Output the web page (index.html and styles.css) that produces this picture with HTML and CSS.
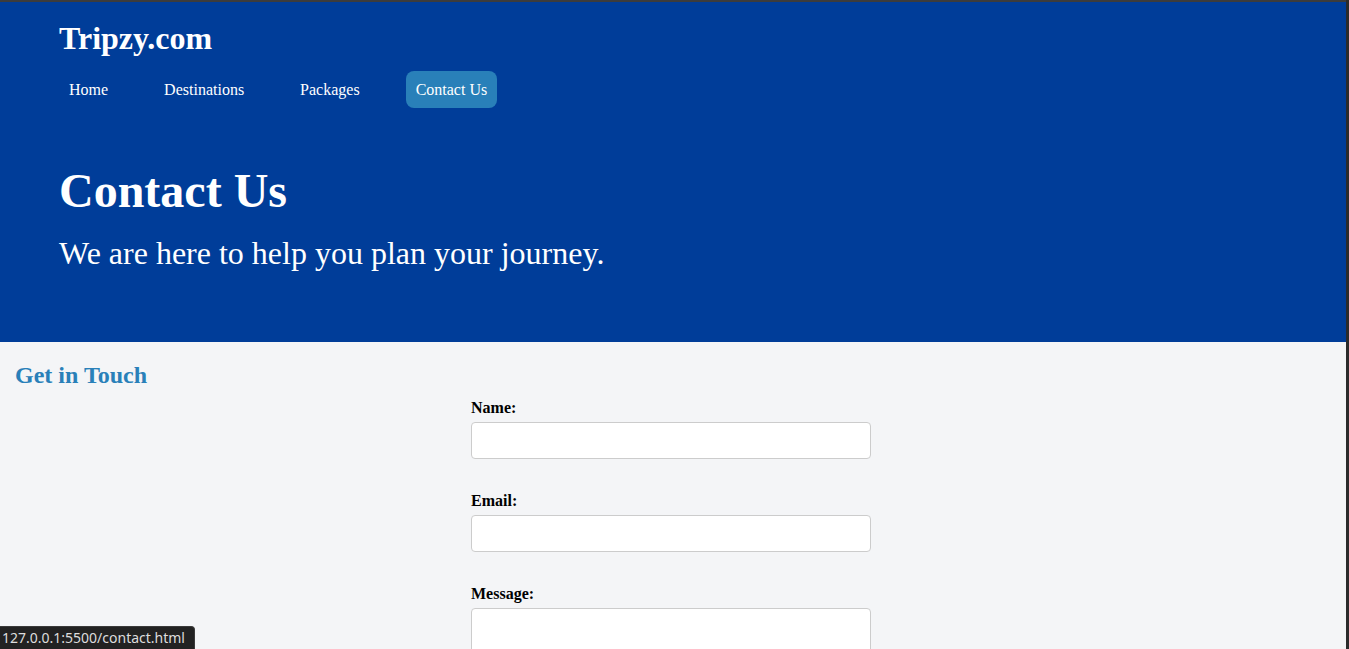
FILE: index.html
```html
<!DOCTYPE html>
<html lang="en">
<head>
<meta charset="utf-8">
<title>Contact Us - Tripzy.com</title>
<link rel="stylesheet" href="styles.css">
</head>
<body>
<header class="site-header">
  <h1 class="logo">Tripzy.com</h1>
  <nav class="nav">
    <a class="nav-link" href="#">Home</a>
    <a class="nav-link" href="#">Destinations</a>
    <a class="nav-link" href="#">Packages</a>
    <a class="nav-link active" href="#">Contact Us</a>
  </nav>
  <div class="hero">
    <h1 class="hero-title">Contact Us</h1>
    <p class="hero-sub">We are here to help you plan your journey.</p>
  </div>
</header>
<main class="contact">
  <h2 class="contact-title">Get in Touch</h2>
  <form class="form">
    <div class="field">
      <label class="label" for="name">Name:</label>
      <input class="input" id="name" type="text">
    </div>
    <div class="field">
      <label class="label" for="email">Email:</label>
      <input class="input" id="email" type="email">
    </div>
    <div class="field">
      <label class="label" for="msg">Message:</label>
      <textarea class="input textarea" id="msg"></textarea>
    </div>
  </form>
</main>
<div class="status">127.0.0.1:5500/contact.html</div>
</body>
</html>
```
FILE: styles.css
```css
html {
  background: #2b2b2b;
}
body {
  margin: 0 3px 0 0;
  border-top: 2px solid #3c3c3c;
  background: #f4f5f7;
  font-family: "Liberation Serif", "Times New Roman", serif;
  color: #000;
  min-height: 700px;
}
.site-header {
  background: #003d99;
  color: #fff;
  padding: 18px 60px 70px 59px;
}
.logo {
  margin: 0;
  font-size: 32px;
  font-weight: bold;
}
.nav {
  display: flex;
  gap: 36px;
  margin-top: 14px;
}
.nav-link {
  color: #fff;
  text-decoration: none;
  font-size: 16px;
  line-height: 18px;
  padding: 9.5px 10px;
  border-radius: 8px;
}
.nav-link.active {
  background: #2980b9;
}
.hero-title {
  margin: 55px 0 0;
  font-size: 48px;
  font-weight: bold;
}
.hero-sub {
  margin: 17px 0 0;
  font-size: 32px;
}
.contact {
  padding: 0 19px 40px 15px;
}
.contact-title {
  margin: 20px 0 10px;
  font-size: 24px;
  color: #2980b9;
}
.form {
  width: 400px;
  margin: 0 auto;
}
.field {
  margin-bottom: 33px;
}
.label {
  display: block;
  font-weight: bold;
  font-size: 16px;
  margin-bottom: 5px;
}
.input {
  display: block;
  box-sizing: border-box;
  width: 400px;
  height: 37px;
  padding: 10px;
  border: 1px solid #ccc;
  border-radius: 4px;
  background: #fff;
  font-family: "Liberation Sans", sans-serif;
  font-size: 14px;
}
.textarea {
  height: 100px;
  resize: vertical;
}
.status {
  position: fixed;
  left: 0;
  bottom: 0;
  height: 22px;
  line-height: 22px;
  padding: 0 9px 0 2px;
  background: #222;
  color: #ddd;
  font-family: "Noto Sans", "DejaVu Sans", sans-serif;
  font-size: 14px;
  border-top-right-radius: 4px;
  border: 1px solid #3a3a3a;
  border-left: none;
  border-bottom: none;
}
```
